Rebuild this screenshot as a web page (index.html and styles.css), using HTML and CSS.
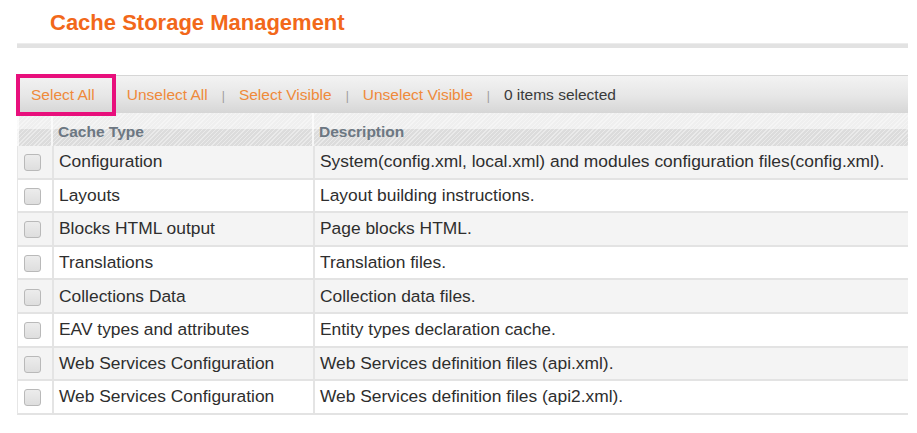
FILE: index.html
```html
<!DOCTYPE html>
<html>
<head>
<meta charset="utf-8">
<title>Cache Storage Management</title>
<link rel="stylesheet" href="styles.css">
</head>
<body>
<div class="page">
  <h3 class="title">Cache Storage Management</h3>
  <div class="rule"></div>
  <div class="grid">
    <div class="massaction">
      <a class="link">Select All</a>
      <a class="link first-gap">Unselect All</a><span class="sep">|</span>
      <a class="link">Select Visible</a><span class="sep">|</span>
      <a class="link">Unselect Visible</a><span class="sep">|</span>
      <span class="count">0 items selected</span>
      <div class="highlight"></div>
    </div>
    <div class="row head">
      <div class="cell cb"></div>
      <div class="cell">Cache Type</div>
      <div class="cell">Description</div>
    </div>
    <div class="row odd">
      <div class="cell cb"><span class="box"></span></div>
      <div class="cell">Configuration</div>
      <div class="cell">System(config.xml, local.xml) and modules configuration files(config.xml).</div>
    </div>
    <div class="row">
      <div class="cell cb"><span class="box"></span></div>
      <div class="cell">Layouts</div>
      <div class="cell">Layout building instructions.</div>
    </div>
    <div class="row odd">
      <div class="cell cb"><span class="box"></span></div>
      <div class="cell">Blocks HTML output</div>
      <div class="cell">Page blocks HTML.</div>
    </div>
    <div class="row">
      <div class="cell cb"><span class="box"></span></div>
      <div class="cell">Translations</div>
      <div class="cell">Translation files.</div>
    </div>
    <div class="row odd">
      <div class="cell cb"><span class="box"></span></div>
      <div class="cell">Collections Data</div>
      <div class="cell">Collection data files.</div>
    </div>
    <div class="row">
      <div class="cell cb"><span class="box"></span></div>
      <div class="cell">EAV types and attributes</div>
      <div class="cell">Entity types declaration cache.</div>
    </div>
    <div class="row odd">
      <div class="cell cb"><span class="box"></span></div>
      <div class="cell">Web Services Configuration</div>
      <div class="cell">Web Services definition files (api.xml).</div>
    </div>
    <div class="row">
      <div class="cell cb"><span class="box"></span></div>
      <div class="cell">Web Services Configuration</div>
      <div class="cell">Web Services definition files (api2.xml).</div>
    </div>
  </div>
</div>
</body>
</html>
```

FILE: styles.css
```css
html, body {
  margin: 0;
  padding: 0;
  background: #ffffff;
}

body {
  font-family: "Liberation Sans", Arial, sans-serif;
  color: #2e2e2e;
}

.page {
  padding: 0 9px 0 17px;
}

.title {
  margin: 0 0 0 33px;
  padding-top: 10px;
  font-size: 22px;
  line-height: 26px;
  font-weight: bold;
  color: #f2681a;
}

.rule {
  margin-top: 7px;
  height: 5px;
  background: #e2e2e2;
  border-top: 1px solid #ececec;
  box-sizing: border-box;
}

.grid {
  margin-top: 27px;
  width: 891px;
}

.massaction {
  position: relative;
  height: 38px;
  box-sizing: border-box;
  border-top: 1px solid #d6d6d6;
  background: linear-gradient(#f3f3f3, #e6e6e6 55%, #d6d6d6);
  display: flex;
  align-items: center;
  padding-left: 14px;
  font-size: 15.5px;
}

.link {
  color: #ef8a3a;
  text-decoration: none;
}

.first-gap {
  margin-left: 32px;
}

.sep {
  color: #9c9c9c;
  font-size: 12px;
  margin: 2px 14px 0 14px;
}

.count {
  color: #3a3a3a;
}

.highlight {
  position: absolute;
  left: -1px;
  top: -2px;
  width: 100px;
  height: 42px;
  box-sizing: border-box;
  border: 4px solid #e80f7c;
}

.row {
  display: grid;
  grid-template-columns: 34px 261px 1fr;
  height: 33.6px;
  box-sizing: border-box;
  border-bottom: 2px solid #e3e3e3;
  border-left: 1px solid #e6e6e6;
  background: #ffffff;
  font-size: 17.4px;
}

.row.odd {
  background: #f4f4f4;
}

.row.head {
  height: 33px;
  border-bottom: none;
  border-left: none;
  font-size: 15.5px;
  font-weight: bold;
  color: #6c7782;
  background:
    repeating-linear-gradient(-45deg, rgba(255,255,255,0.4) 0 1px, rgba(255,255,255,0) 1px 3px),
    linear-gradient(#efefef 0 50%, #dcdcdc 50% 100%);
}

.cell {
  display: flex;
  align-items: center;
  padding-left: 5px;
  border-left: 2px solid #e4e4e4;
  white-space: nowrap;
  overflow: hidden;
}

.row.head .cell {
  padding-top: 4px;
  border-left: 2px solid rgba(255,255,255,0.7);
}

.cell.cb {
  border-left: none;
  padding-left: 6px;
}

.box {
  display: block;
  width: 17px;
  height: 17px;
  box-sizing: border-box;
  border: 1px solid #b9b9b9;
  border-radius: 3px;
  background: linear-gradient(#ececec, #dedede);
  margin-top: 2px;
}
```
